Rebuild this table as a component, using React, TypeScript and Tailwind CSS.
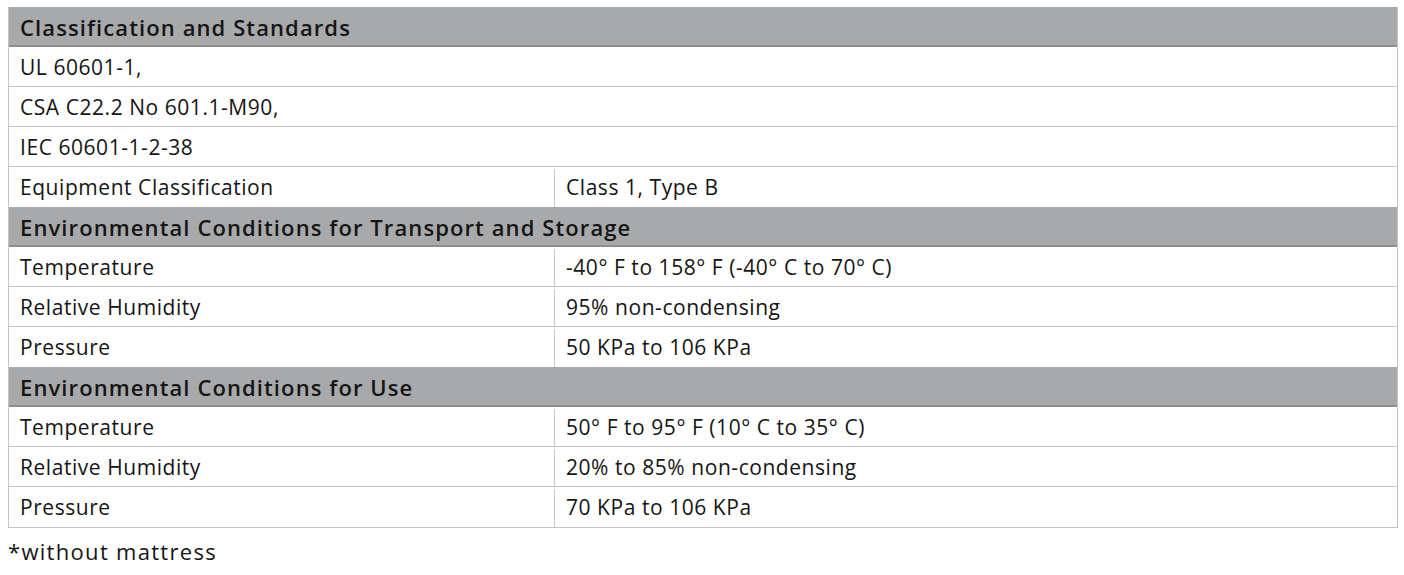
const sections = [
  {
    title: 'Classification and Standards',
    rows: [
      ['UL 60601-1,'],
      ['CSA C22.2 No 601.1-M90,'],
      ['IEC 60601-1-2-38'],
      ['Equipment Classification', 'Class 1, Type B'],
    ],
  },
  {
    title: 'Environmental Conditions for Transport and Storage',
    rows: [
      ['Temperature', '-40° F to 158° F (-40° C to 70° C)'],
      ['Relative Humidity', '95% non-condensing'],
      ['Pressure', '50 KPa to 106 KPa'],
    ],
  },
  {
    title: 'Environmental Conditions for Use',
    rows: [
      ['Temperature', '50° F to 95° F (10° C to 35° C)'],
      ['Relative Humidity', '20% to 85% non-condensing'],
      ['Pressure', '70 KPa to 106 KPa'],
    ],
  },
];

export default function App() {
  return (
    <div
      className="bg-white w-[1404px] h-[575px] pt-[7px] pl-[8px] text-[#151515]"
      style={{ fontFamily: '"Open Sans", "Liberation Sans", sans-serif' }}
    >
      <div className="w-[1390px] border-l border-r border-b border-[#c4c4c4]">
        {sections.map((section) => (
          <div key={section.title}>
            <div className="h-[40px] bg-[#a8a9ab] border-b-2 border-[#8e8f91] flex items-center pl-[11px] pt-[3px] text-[22px] tracking-[1.1px] font-semibold">
              {section.title}
            </div>
            {section.rows.map((row, i) => (
              <div
                key={section.title + i}
                className={`h-[40px] flex text-[21px] tracking-[0.55px] pt-[2px] ${i < section.rows.length - 1 ? 'border-b border-[#c4c4c4]' : ''}`}
              >
                {row.length === 1 ? (
                  <div className="flex items-center pl-[11px]">{row[0]}</div>
                ) : (
                  <>
                    <div className="w-[546px] border-r border-[#c4c4c4] flex items-center pl-[11px]">{row[0]}</div>
                    <div className="flex items-center pl-[11px]">{row[1]}</div>
                  </>
                )}
              </div>
            ))}
          </div>
        ))}
      </div>
      <div className="mt-[7px] text-[22px] tracking-[1.3px]">*without mattress</div>
    </div>
  );
}
